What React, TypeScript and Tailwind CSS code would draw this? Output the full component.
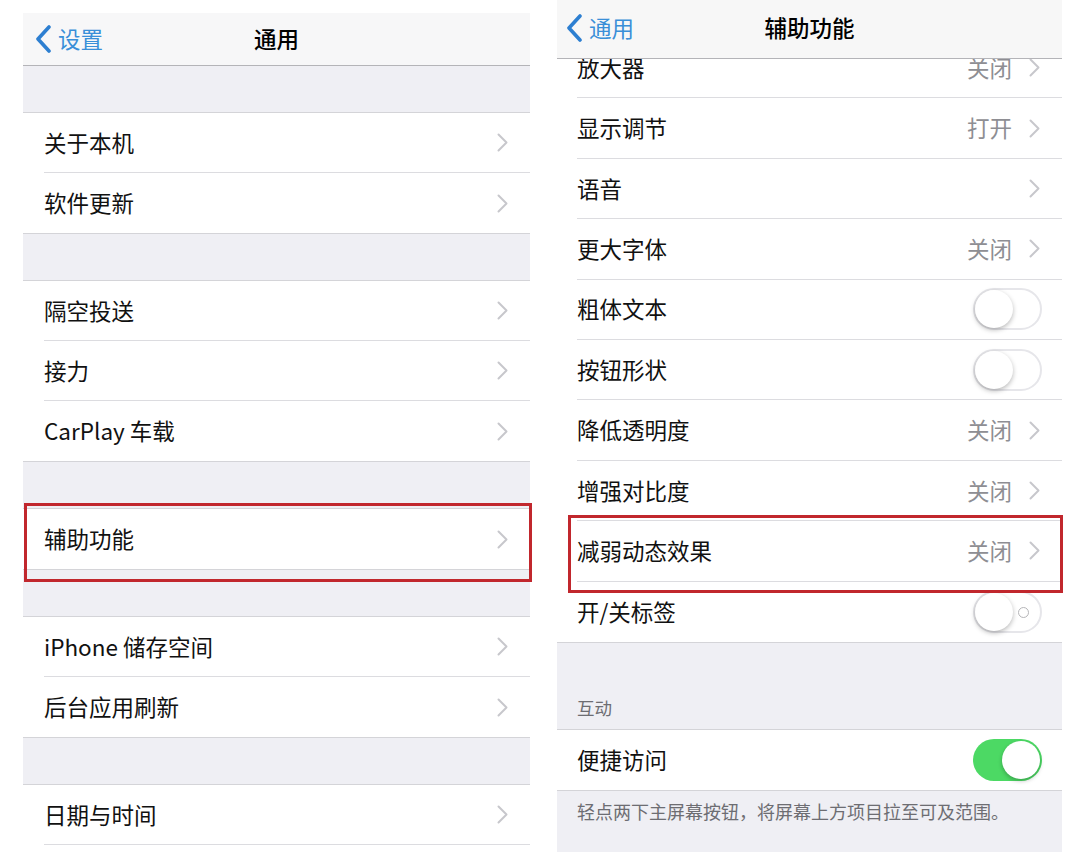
import React from 'react';

const font = { fontFamily: '"Noto Sans CJK SC", "Noto Sans", sans-serif' };

const Chevron = () => (
  <svg width="11" height="19" viewBox="0 0 11 19" className="shrink-0">
    <polyline points="1.5,1.5 9.5,9.5 1.5,17.5" fill="none" stroke="#c7c7cc" strokeWidth="2" strokeLinecap="round" strokeLinejoin="round" />
  </svg>
);

const BackChevron = () => (
  <svg width="17" height="28" viewBox="0 0 17 28" className="shrink-0">
    <polyline points="14,2 3,14 14,26" fill="none" stroke="#2d7fd1" strokeWidth="3.6" strokeLinecap="round" strokeLinejoin="round" />
  </svg>
);

const Toggle = ({ on, label }: { on?: boolean; label?: boolean }) =>
  on ? (
    <div className="relative w-[69px] h-[42px] rounded-full bg-[#4cd964] shrink-0">
      <div className="absolute right-[2px] top-[2px] w-[38px] h-[38px] rounded-full bg-white shadow-[0_2px_4px_rgba(0,0,0,0.25)]" />
    </div>
  ) : (
    <div className="relative w-[69px] h-[42px] rounded-full bg-white border-2 border-[#e6e6ea] shrink-0">
      {label && <div className="absolute right-[11px] top-[14px] w-[11px] h-[11px] rounded-full border-[1.5px] border-[#b5b5b8]" />}
      <div className="absolute left-0 top-0 w-[38px] h-[38px] rounded-full bg-white shadow-[0_2px_5px_rgba(0,0,0,0.28)]" />
    </div>
  );

type RowProps = {
  label: string;
  value?: string;
  toggle?: 'off' | 'on' | 'label';
  last?: boolean;
  h: string;
  pl: string;
  pr: string;
  box?: React.ReactNode;
};

const Row = ({ label, value, toggle, last, h, pl, pr, box }: RowProps) => (
  <div className={`relative bg-white flex ${h} ${pl}`}>
    <div className={`flex-1 flex items-center ${pr} ${last ? '' : 'border-b border-[#dcdce0]'}`}>
      <span className="flex-1 text-[22.5px] text-[#111]">{label}</span>
      {value && <span className="text-[22.5px] text-[#8e8e93] mr-[17px]">{value}</span>}
      {toggle ? <Toggle on={toggle === 'on'} label={toggle === 'label'} /> : <Chevron />}
    </div>
    {box}
  </div>
);

const LeftGroup = ({ items, boxed }: { items: string[]; boxed?: boolean }) => (
  <div className="border-y border-[#d4d4d8]">
    {items.map((t, i) => (
      <Row
        key={t}
        label={t}
        h="h-[60px]"
        pl="pl-[21px]"
        pr="pr-[22px]"
        last={i === items.length - 1}
        box={boxed ? <div className="absolute z-20 -top-[6px] -bottom-[13px] left-[1px] -right-[2px] border-[3px] border-[#c1272d]" /> : null}
      />
    ))}
  </div>
);

const LeftPanel = () => (
  <div className="w-[507px] mt-[13px] bg-[#efeff4] flex flex-col">
    <div className="h-[53px] shrink-0 bg-[#f7f7f8] border-b border-[#b4b4b8] flex items-center relative">
      <div className="flex items-center pl-[12px] gap-[6px] text-[22.5px] text-[#3a8fd8]">
        <BackChevron />
        <span>设置</span>
      </div>
      <div className="absolute inset-0 flex items-center justify-center text-[22.5px] font-medium text-black">通用</div>
    </div>
    <div className="h-[46px] shrink-0" />
    <LeftGroup items={['关于本机', '软件更新']} />
    <div className="h-[46px] shrink-0" />
    <LeftGroup items={['隔空投送', '接力', 'CarPlay 车载']} />
    <div className="h-[46px] shrink-0" />
    <LeftGroup items={['辅助功能']} boxed />
    <div className="h-[46px] shrink-0" />
    <LeftGroup items={['iPhone 储存空间', '后台应用刷新']} />
    <div className="h-[46px] shrink-0" />
    <div className="border-t border-[#d4d4d8]">
      <Row label="日期与时间" h="h-[60px]" pl="pl-[21px]" pr="pr-[22px]" />
      <div className="h-[20px] bg-white" />
    </div>
  </div>
);

const rightRows: { label: string; value?: string; toggle?: 'off' | 'on' | 'label' }[] = [
  { label: '放大器', value: '关闭' },
  { label: '显示调节', value: '打开' },
  { label: '语音' },
  { label: '更大字体', value: '关闭' },
  { label: '粗体文本', toggle: 'off' },
  { label: '按钮形状', toggle: 'off' },
  { label: '降低透明度', value: '关闭' },
  { label: '增强对比度', value: '关闭' },
  { label: '减弱动态效果', value: '关闭' },
  { label: '开/关标签', toggle: 'label' },
];

const RightPanel = () => (
  <div className="w-[505px] h-[852px] bg-[#efeff4] flex flex-col">
    <div className="relative z-30 h-[59px] shrink-0 bg-[#f7f7f7] border-b border-[#b4b4b8] flex items-center">
      <div className="flex items-center pl-[9px] gap-[6px] text-[22.5px] text-[#3a8fd8] -mt-[2px]">
        <BackChevron />
        <span>通用</span>
      </div>
      <div className="absolute inset-0 flex items-center justify-center text-[22.5px] font-medium text-black -mt-[2px]">辅助功能</div>
    </div>
    <div className="-mt-[21px] border-b border-[#d4d4d8]">
      {rightRows.map((r, i) => (
        <Row
          key={r.label}
          label={r.label}
          value={r.value}
          toggle={r.toggle}
          h="h-[60.4px]"
          pl="pl-[20px]"
          pr={r.toggle ? 'pr-[20px]' : 'pr-[22px]'}
          last={i === rightRows.length - 1}
          box={r.label === '减弱动态效果' ? <div className="absolute z-20 -top-[6px] bottom-[-11px] left-[11px] -right-[1px] border-[3px] border-[#c1272d]" /> : null}
        />
      ))}
    </div>
    <div className="h-[86px] shrink-0 flex items-end pl-[20px] pb-[8px] text-[17.5px] text-[#6d6d72]">互动</div>
    <div className="border-y border-[#d4d4d8]">
      <Row label="便捷访问" toggle="on" h="h-[60px]" pl="pl-[20px]" pr="pr-[20px]" last />
    </div>
    <div className="pl-[20px] pt-[7px] text-[18px] text-[#6d6d72]">轻点两下主屏幕按钮，将屏幕上方项目拉至可及范围。</div>
  </div>
);

export default function App() {
  return (
    <div className="w-[1080px] h-[852px] bg-white flex overflow-hidden" style={font}>
      <div className="w-[23px] shrink-0" />
      <LeftPanel />
      <div className="w-[27px] shrink-0" />
      <RightPanel />
    </div>
  );
}
